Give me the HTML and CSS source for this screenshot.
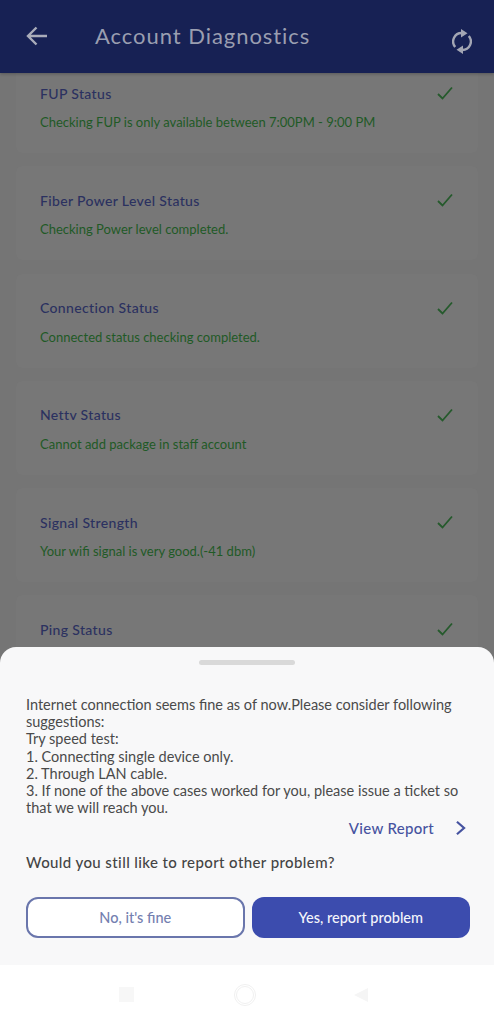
FILE: index.html
```html
<!DOCTYPE html>
<html lang="en">
<head>
  <meta charset="UTF-8">
  <meta name="viewport" content="width=device-width, initial-scale=1.0">
  <title>Account Diagnostics</title>
  <link rel="stylesheet" href="styles.css">
</head>
<body>
  <div class="screen">
    <header class="app-bar">
      <svg class="back-icon" viewBox="0 0 24 24"><path d="M22 12H3M11.5 3.5 3 12l8.5 8.5"/></svg>
      <h1 class="app-title">Account Diagnostics</h1>
      <svg class="refresh-icon" viewBox="0 0 20 25">
        <path class="arc" d="M3.2 18A8.5 8.5 0 0 1 10 4"/>
        <path class="arc" d="M16.8 7A8.5 8.5 0 0 1 10 21"/>
        <path class="head" d="M9 0l6.5 4.2L9 8.5z"/>
        <path class="head" d="M11 16.5l-6.5 4.2L11 25z"/>
      </svg>
    </header>

    <main class="status-list">
      <div class="status-card">
        <div class="status-head">
          <span class="status-name">FUP Status</span>
          <svg class="check" viewBox="0 0 16 14"><path d="M1 8l4.5 4.5L15 1.5"/></svg>
        </div>
        <p class="status-msg">Checking FUP is only available between 7:00PM - 9:00 PM</p>
      </div>
      <div class="status-card">
        <div class="status-head">
          <span class="status-name">Fiber Power Level Status</span>
          <svg class="check" viewBox="0 0 16 14"><path d="M1 8l4.5 4.5L15 1.5"/></svg>
        </div>
        <p class="status-msg">Checking Power level completed.</p>
      </div>
      <div class="status-card">
        <div class="status-head">
          <span class="status-name">Connection Status</span>
          <svg class="check" viewBox="0 0 16 14"><path d="M1 8l4.5 4.5L15 1.5"/></svg>
        </div>
        <p class="status-msg">Connected status checking completed.</p>
      </div>
      <div class="status-card">
        <div class="status-head">
          <span class="status-name">Nettv Status</span>
          <svg class="check" viewBox="0 0 16 14"><path d="M1 8l4.5 4.5L15 1.5"/></svg>
        </div>
        <p class="status-msg">Cannot add package in staff account</p>
      </div>
      <div class="status-card">
        <div class="status-head">
          <span class="status-name">Signal Strength</span>
          <svg class="check" viewBox="0 0 16 14"><path d="M1 8l4.5 4.5L15 1.5"/></svg>
        </div>
        <p class="status-msg">Your wifi signal is very good.(-41 dbm)</p>
      </div>
      <div class="status-card">
        <div class="status-head">
          <span class="status-name">Ping Status</span>
          <svg class="check" viewBox="0 0 16 14"><path d="M1 8l4.5 4.5L15 1.5"/></svg>
        </div>
      </div>
    </main>

    <section class="sheet">
      <div class="sheet-handle"></div>
      <p class="sheet-text">Internet connection seems fine as of now.Please consider following suggestions:<br>Try speed test:<br>1. Connecting single device only.<br>2. Through LAN cable.<br>3. If none of the above cases worked for you, please issue a ticket so that we will reach you.</p>
      <div class="report-link">
        <span>View Report</span>
        <svg class="chevron" viewBox="0 0 12 18"><path d="M2 2l8 7-8 7"/></svg>
      </div>
      <p class="sheet-question">Would you still like to report other problem?</p>
      <div class="sheet-actions">
        <button class="btn btn-outline">No, it's fine</button>
        <button class="btn btn-solid">Yes, report problem</button>
      </div>
    </section>

    <nav class="nav-bar">
      <span class="nav-square"></span>
      <span class="nav-circle"></span>
      <svg class="nav-back" viewBox="0 0 16 16"><path d="M15 1v14L1 8z"/></svg>
    </nav>
  </div>
</body>
</html>
```

FILE: styles.css
```css
* {
  margin: 0;
  padding: 0;
  box-sizing: border-box;
}

body {
  background-color: #ffffff;
  font-family: "Lato", "Open Sans", sans-serif;
}

.screen {
  position: relative;
  width: 494px;
  height: 1024px;
  overflow: hidden;
  background-color: #757575;
}

.app-bar {
  position: relative;
  z-index: 1;
  display: flex;
  align-items: flex-start;
  height: 73px;
  padding: 24px 22px 0 25px;
  background-color: #172154;
  box-shadow: 0 1px 3px rgba(0, 0, 0, 0.25);
}

.back-icon {
  width: 24px;
  height: 24px;
  fill: none;
  stroke: #a9acba;
  stroke-width: 2.4;
}

.app-title {
  margin-left: 46px;
  font-size: 22px;
  line-height: 24px;
  font-weight: 400;
  letter-spacing: 0.95px;
  color: #9a9eb0;
}

.refresh-icon {
  width: 20px;
  height: 25px;
  margin: 5px 0 0 auto;
  fill: none;
}

.refresh-icon .arc {
  stroke: #a3a6b4;
  stroke-width: 2.4;
}

.refresh-icon .head {
  fill: #a3a6b4;
}

.status-list {
  display: flex;
  flex-direction: column;
  gap: 13.3px;
  padding: 0 16px;
  margin-top: -14px;
}

.status-card {
  height: 94px;
  padding: 24px 24px 0;
  background-color: #777777;
  border-radius: 6px;
}

.status-head {
  display: flex;
  align-items: center;
  justify-content: space-between;
  height: 20px;
  padding-right: 1px;
}

.status-name {
  font-size: 14px;
  font-weight: 500;
  letter-spacing: 0.35px;
  color: #2b3160;
}

.check {
  width: 16px;
  height: 14px;
  fill: none;
  stroke: #255a2c;
  stroke-width: 1.8;
}

.status-msg {
  margin-top: 9px;
  font-size: 13px;
  line-height: 20px;
  color: #1f5a26;
}

.sheet {
  position: absolute;
  left: 0;
  top: 647px;
  width: 494px;
  height: 318px;
  padding: 13px 24px 0 26px;
  background-color: #f8f8f9;
  border-radius: 16px 16px 0 0;
}

.sheet-handle {
  width: 96px;
  height: 5px;
  margin: 0 auto 0 173px;
  background-color: #d9d9d9;
  border-radius: 3px;
}

.sheet-text {
  margin-top: 31px;
  font-size: 14.5px;
  line-height: 17.2px;
  color: #4a4a4a;
}

.report-link {
  display: flex;
  align-items: center;
  justify-content: flex-end;
  gap: 21px;
  height: 20px;
  margin-top: 2px;
  padding-right: 4px;
  font-size: 15px;
  font-weight: 500;
  letter-spacing: 0.3px;
  color: #4653a0;
}

.chevron {
  width: 11px;
  height: 16px;
  fill: none;
  stroke: #4653a0;
  stroke-width: 2.5;
}

.sheet-question {
  margin-top: 14px;
  font-size: 15px;
  font-weight: 500;
  letter-spacing: 0.4px;
  line-height: 20px;
  color: #444444;
}

.sheet-actions {
  display: flex;
  gap: 7px;
  margin-top: 25px;
}

.btn {
  width: 219px;
  height: 41px;
  border-radius: 12px;
  font-family: inherit;
  font-size: 14.5px;
  font-weight: 500;
}

.btn-outline {
  border: 2px solid #6a76ac;
  background-color: #ffffff;
  color: #7480b0;
}

.btn-solid {
  border: none;
  background-color: #3c4cae;
  color: #f4f5fb;
}

.nav-bar {
  position: absolute;
  left: 0;
  top: 965px;
  display: flex;
  align-items: center;
  width: 494px;
  height: 59px;
  background-color: #ffffff;
}

.nav-square {
  width: 15px;
  height: 15px;
  margin-left: 119px;
  background-color: #f7f7f7;
  filter: blur(0.6px);
}

.nav-circle {
  width: 22px;
  height: 22px;
  margin-left: 100px;
  border: 3px double #f0f0f0;
  border-radius: 50%;
  filter: blur(0.6px);
}

.nav-back {
  width: 16px;
  height: 16px;
  margin-left: 97px;
  fill: #f5f5f5;
  filter: blur(0.6px);
}
```
